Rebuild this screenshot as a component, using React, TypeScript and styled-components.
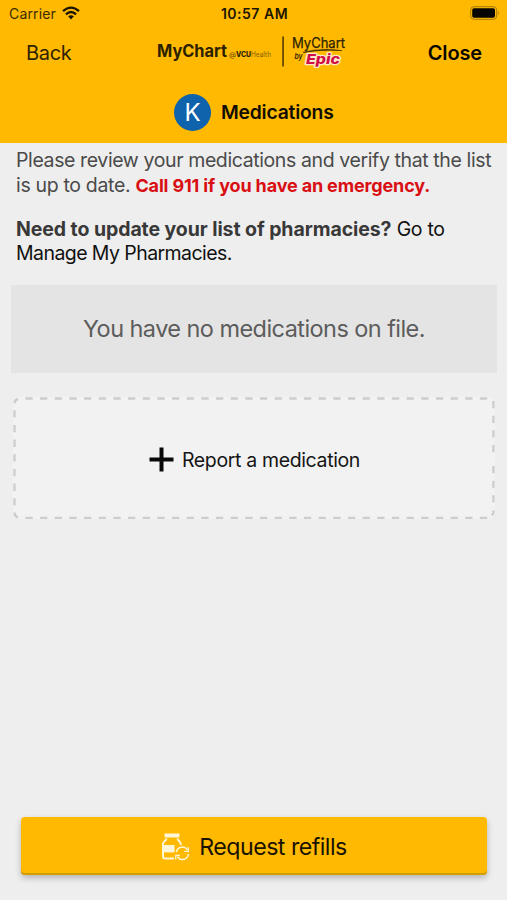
import React from "react";
import styled, { createGlobalStyle } from "styled-components";

const Global = createGlobalStyle`
  * { box-sizing: border-box; }
  body { margin: 0; background: #eeeeee; font-family: Inter, "Liberation Sans", sans-serif; color: #111; }
  button { font: inherit; color: inherit; border: 0; background: none; padding: 0; }
  svg { display: block; overflow: visible; }
`;

const Screen = styled.div`
  height: 900px;
  display: flex;
  flex-direction: column;
  background: #eeeeee;
`;

const Header = styled.header`
  height: 143px;
  flex: none;
  background: #ffb900;
  color: #1c1500;
`;

const StatusBar = styled.div`
  height: 28px;
  padding: 0 7px 2px 9px;
  display: grid;
  grid-template-columns: 1fr auto 1fr;
  align-items: center;
  font-size: 14px;
`;

const Carrier = styled.div`
  display: flex;
  align-items: center;
  gap: 6px;
  letter-spacing: 0.15px;
  color: #3a2c00;
`;

const Clock = styled.div`
  font-weight: 600;
  letter-spacing: 0.5px;
`;

const Battery = styled.div`
  justify-self: end;
`;

const NavBar = styled.nav`
  height: 50px;
  padding: 0 25px 0 26px;
  display: flex;
  align-items: center;
  justify-content: space-between;
`;

const NavButton = styled.button<{ $strong?: boolean }>`
  font-size: 20px;
  line-height: 24px;
  font-weight: ${(p) => (p.$strong ? 600 : 400)};
  letter-spacing: ${(p) => (p.$strong ? "-0.15px" : "-0.3px")};
  color: ${(p) => (p.$strong ? "#0a0700" : "#2e2300")};
`;

const TitleRow = styled.div`
  height: 65px;
  display: flex;
  gap: 10px;
  align-items: flex-start;
  padding: 16px 0 0 174px;
`;

const Avatar = styled.div`
  width: 37px;
  height: 37px;
  border-radius: 50%;
  display: grid;
  place-items: center;
  background: #0f62ac;
  color: #fff;
  font-size: 24px;
`;

const Title = styled.h1`
  margin: 0;
  font-size: 19.3px;
  line-height: 37px;
  font-weight: 600;
  letter-spacing: -0.2px;
  color: #120d00;
`;

const Intro = styled.section`
  padding: 5px 10px 0 16px;
  font-size: 19.5px;
  line-height: 24.5px;
  color: #4a4a4a;
`;

const Paragraph = styled.p`
  margin: 0 0 19px;

  & + & {
    margin-top: 19.6px;
  }
`;

const Line = styled.span<{ $track: number }>`
  display: block;
  white-space: nowrap;
  letter-spacing: ${(p) => p.$track}px;
`;

const Urgent = styled.strong`
  font-size: 18px;
  line-height: 1;
  font-weight: 700;
  letter-spacing: -0.15px;
  color: #d90f14;
`;

const Question = styled.strong`
  font-weight: 700;
  letter-spacing: -0.08px;
  color: #383838;
`;

const Link = styled.a`
  color: #111;
`;

const EmptyNotice = styled.div`
  height: 88px;
  margin: 0 10px 0 11px;
  display: grid;
  place-items: center;
  background: #e4e4e4;
  color: #5c5c5c;
  font-size: 23.5px;
  letter-spacing: -0.56px;
`;

const ReportCard = styled.button`
  position: relative;
  height: 122px;
  margin: 24px 12px 0 13px;
  padding: 4px 0 0 1px;
  display: flex;
  align-items: center;
  justify-content: center;
  gap: 8px;
  border-radius: 6px;
  background: #f2f2f2;
  color: #151515;
  font-size: 19.5px;
  letter-spacing: -0.36px;
`;

const DashedOutline = styled.svg`
  position: absolute;
  inset: 0;
`;

const Footer = styled.footer`
  margin-top: auto;
  padding: 0 20px 25px 21px;
`;

const RefillButton = styled.button`
  width: 100%;
  height: 58px;
  padding-top: 1px;
  display: flex;
  align-items: center;
  justify-content: center;
  gap: 10px;
  border-radius: 4px;
  background: #ffb900;
  color: #1a1300;
  box-shadow: inset 0 -2px 0 #d39b04, 0 3px 6px rgba(0, 0, 0, 0.24);
  font-size: 23.2px;
  letter-spacing: -0.53px;
`;

const WifiIcon = () => (
  <svg width="18" height="14" viewBox="0 0 18 14">
    <g fill="none" stroke="#1c1500" strokeWidth="2.3">
      <path d="M1 5.2Q9-2 17 5.2" />
      <path d="M3.9 8.3Q9 3.7 14.1 8.3" />
    </g>
    <path d="M6.1 10.3Q9 8 11.9 10.3L9 13.5Z" fill="#1c1500" />
  </svg>
);

const BatteryIcon = () => (
  <svg width="30" height="14" viewBox="0 0 30 14">
    <rect x="0.7" y="0.7" width="26" height="12.6" rx="3.2" fill="none" stroke="#a77b08" strokeWidth="1" />
    <rect x="2.2" y="2.2" width="22.8" height="9.6" rx="1.8" fill="#080600" />
    <path d="M28 4.8Q29.8 7 28 9.2Z" fill="#a77b08" />
  </svg>
);

const Brand = () => (
  <svg width="200" height="46" viewBox="-6 -6 200 46" fill="#2b2100">
    <text x="1" y="20.5" fontSize="17" fontWeight="700" textLength="70" lengthAdjust="spacingAndGlyphs">MyChart</text>
    <text x="73" y="20.8" fontSize="6.6" textLength="7" lengthAdjust="spacingAndGlyphs" opacity="0.75">@</text>
    <text x="80" y="20.8" fontSize="7.2" fontWeight="800" textLength="15" lengthAdjust="spacingAndGlyphs">VCU</text>
    <text x="95" y="20.8" fontSize="7" textLength="20" lengthAdjust="spacingAndGlyphs" opacity="0.6">Health</text>
    <rect x="126.4" y="0.5" width="1.3" height="30" />
    <text x="136" y="11.8" fontSize="14" textLength="53" lengthAdjust="spacingAndGlyphs" stroke="#2b2100" strokeWidth="0.25">MyChart</text>
    <path d="M147 16.2Q165 11.6 186 14.6Q165 13.2 148 16.6Z" stroke="#2b2100" strokeWidth="0.5" />
    <text x="138.5" y="22.5" fontSize="7.5" fontWeight="600" fontStyle="italic" textLength="8" lengthAdjust="spacingAndGlyphs">by</text>
    <text
      x="150" y="27.8" fontSize="13.7" fontWeight="800" fontStyle="italic" textLength="34" lengthAdjust="spacingAndGlyphs"
      fill="#cf0f45" stroke="#ffe9c9" strokeWidth="2.6" strokeLinejoin="round" paintOrder="stroke"
    >Epic</text>
  </svg>
);

const PlusIcon = () => (
  <svg width="25" height="25" viewBox="0 0 25 25">
    <path d="M12.5 0.5V24.5M0.5 12.5H24.5" stroke="#080808" strokeWidth="4" />
  </svg>
);

const PillBottleIcon = () => (
  <svg width="28" height="28" viewBox="0 0 28 28" fill="none" stroke="#fff6d8">
    <rect x="3.5" y="0.4" width="15" height="4.2" rx="0.8" fill="#fff6d8" stroke="none" />
    <path d="M5.5 5.5C5.5 7.5 2 8 2 11V23.5Q2 25.5 4 25.5H13M16.5 5.5C16.5 7.5 20 8.5 20 12" strokeWidth="2" />
    <rect x="2" y="12" width="11.5" height="7.4" fill="#fff6d8" stroke="none" />
    <path d="M15.4 19.2A6 6 0 0 1 26.3 16.8M27.4 21A6 6 0 0 1 16.6 24" strokeWidth="1.5" />
    <path d="M27.3 14.3V18.3H23.2M14.8 26.6V22.5H18.9" strokeWidth="1.3" />
  </svg>
);

const CardOutline = () => (
  <DashedOutline width="482" height="122" viewBox="0 0 482 122" fill="none" stroke="#cdcdcd" strokeWidth="2.3">
    <path d="M12.4 1.5H476" strokeDasharray="7.3 7.36" />
    <path d="M12.4 120.8H475" strokeDasharray="7.3 7.36" />
    <path d="M1.5 13.3V112" strokeDasharray="7.3 7.36" />
    <path d="M480.4 4V56M480.4 69V108" strokeDasharray="7.3 7.36" />
    <path d="M1.5 6.3Q1.7 2.7 5.2 2M480.4 113.5V116L479 118.5M1.5 115.5Q1.7 119.5 5 120.4" />
  </DashedOutline>
);

export default function App() {
  return (
    <Screen>
      <Global />
      <Header>
        <StatusBar>
          <Carrier>Carrier <WifiIcon /></Carrier>
          <Clock>10:57 AM</Clock>
          <Battery><BatteryIcon /></Battery>
        </StatusBar>
        <NavBar>
          <NavButton>Back</NavButton>
          <Brand />
          <NavButton $strong>Close</NavButton>
        </NavBar>
        <TitleRow>
          <Avatar>K</Avatar>
          <Title>Medications</Title>
        </TitleRow>
      </Header>
      <Intro>
        <Paragraph>
          <Line $track={-0.39}>Please review your medications and verify that the list</Line>
          <Line $track={-0.33}>is up to date. <Urgent>Call 911 if you have an emergency.</Urgent></Line>
        </Paragraph>
        <Paragraph>
          <Line $track={-0.3}><Question>Need to update your list of pharmacies?</Question> <Link>Go to</Link></Line>
          <Line $track={-0.57}><Link>Manage My Pharmacies.</Link></Line>
        </Paragraph>
      </Intro>
      <EmptyNotice>You have no medications on file.</EmptyNotice>
      <ReportCard>
        <CardOutline />
        <PlusIcon />
        Report a medication
      </ReportCard>
      <Footer>
        <RefillButton>
          <PillBottleIcon />
          Request refills
        </RefillButton>
      </Footer>
    </Screen>
  );
}
